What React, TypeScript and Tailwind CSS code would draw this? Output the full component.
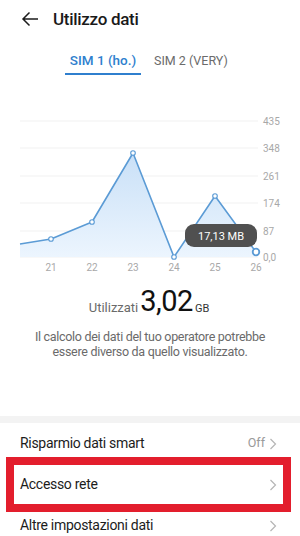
import React from "react";

const font = { fontFamily: "Roboto, 'Noto Sans', sans-serif" };

function Chart() {
  const gridYs = [21, 48, 76, 103, 131, 157];
  const labels = ["435", "348", "261", "174", "87", "0,0"];
  const pts: [number, number][] = [
    [20, 144],
    [51, 139],
    [92, 122],
    [133, 53],
    [174, 157],
    [215, 96],
    [256, 152],
  ];
  const line = pts.map((p, i) => `${i === 0 ? "M" : "L"}${p[0]} ${p[1]}`).join(" ");
  const area = `${line} L256 157 L20 157 Z`;
  const xs = [["21", 51], ["22", 92], ["23", 133], ["24", 174], ["25", 215], ["26", 256]] as const;
  return (
    <svg width="300" height="180" viewBox="0 0 300 180" className="block">
      <defs>
        <linearGradient id="fillg" x1="0" y1="0" x2="0" y2="1">
          <stop offset="0%" stopColor="#c9e0f7" />
          <stop offset="100%" stopColor="#ecf5fe" />
        </linearGradient>
      </defs>
      {gridYs.map((y, i) => (
        <line key={i} x1="20" x2="258" y1={y} y2={y} stroke="#f1f1f1" strokeWidth="1" />
      ))}
      <path d={area} fill="url(#fillg)" />
      <path d={line} fill="none" stroke="#5b9bd5" strokeWidth="1.6" strokeLinejoin="round" />
      {pts.slice(1, 6).map((p, i) => (
        <circle key={i} cx={p[0]} cy={p[1]} r="2.3" fill="#fff" stroke="#5b9bd5" strokeWidth="1.1" />
      ))}
      <circle cx="256" cy="152" r="3.3" fill="#fff" stroke="#5b9bd5" strokeWidth="1.8" />
      {labels.map((l, i) => (
        <text key={l} x="263" y={gridYs[i] + 4} fontSize="10" fill="#a8a8a8" style={font}>
          {l}
        </text>
      ))}
      {xs.map(([t, x]) => (
        <text key={t} x={x} y="171" fontSize="10" fill="#a8a8a8" textAnchor="middle" style={font}>
          {t}
        </text>
      ))}
      <rect x="185" y="124" width="72" height="23" rx="9" fill="#505050" />
      <text x="221" y="140" fontSize="11" fill="#ffffff" textAnchor="middle" style={font}>
        17,13 MB
      </text>
    </svg>
  );
}

function Chevron({ color = "#b5b5b5" }: { color?: string }) {
  return (
    <svg width="8" height="12" viewBox="0 0 8 12" className="block">
      <path d="M1.5 1 L6.5 6 L1.5 11" fill="none" stroke={color} strokeWidth="1.2" />
    </svg>
  );
}

export default function App() {
  return (
    <div className="relative w-[300px] h-[536px] bg-white overflow-hidden" style={font}>
      {/* Header */}
      <div className="h-[38px] flex items-center pl-[21px]">
        <svg width="18" height="16" viewBox="0 0 18 16" className="block">
          <path d="M17 8 H2 M8.5 1.5 L2 8 L8.5 14.5" fill="none" stroke="#1c1c1c" strokeWidth="1.5" />
        </svg>
        <span className="ml-[14px] text-[17px] font-medium text-[#1a1a1a] leading-none tracking-[-0.3px]">
          Utilizzo dati
        </span>
      </div>
      {/* Tabs */}
      <div className="h-[38px] flex items-stretch pl-[65px]">
        <div className="w-[76px] flex flex-col items-center justify-end">
          <span className="text-[13.5px] font-medium text-[#2f7fce] leading-none mb-[6px]">SIM 1 (ho.)</span>
          <div className="h-[2px] w-full bg-[#2f7fce] mb-[1px]" />
        </div>
        <div className="ml-[13px] flex flex-col justify-end">
          <span className="text-[12.5px] text-[#6b6b6b] leading-none mb-[9px]">SIM 2 (VERY)</span>
        </div>
      </div>
      <div className="h-[24px]" />
      <Chart />
      {/* Summary */}
      <div className="flex items-end justify-center h-[36px] pr-[2px]">
        <span className="text-[13px] text-[#6a6a6a] leading-none mb-[2px]">Utilizzati</span>
        <span className="text-[29px] text-[#111] leading-none ml-[2px] tracking-[-0.5px]">3,02</span>
        <span className="text-[11px] text-[#333] leading-none ml-[2px] mb-[2px]">GB</span>
      </div>
      <div className="mt-[13px] text-center text-[12.5px] leading-[15px] tracking-[-0.3px] text-[#6a6a6a] px-[20px]">
        Il calcolo dei dati del tuo operatore potrebbe
        <br />
        essere diverso da quello visualizzato.
      </div>
      <div className="absolute left-0 right-0 top-[416px]">
        <div className="h-[7px] bg-[#f3f3f3]" />
        <div className="h-[41px] flex items-center pl-[20px] pr-[23px]">
          <span className="flex-1 text-[14px] tracking-[-0.3px] text-[#1c1c1c]">Risparmio dati smart</span>
          <span className="text-[12.5px] text-[#9a9a9a] mr-[4px]">Off</span>
          <Chevron />
        </div>
        <div className="h-[41px] flex items-center pl-[20px] pr-[23px]">
          <span className="flex-1 text-[14px] tracking-[-0.3px] text-[#1c1c1c]">Accesso rete</span>
          <Chevron />
        </div>
        <div className="h-[41px] flex items-center pl-[20px] pr-[23px]">
          <span className="flex-1 text-[14px] tracking-[-0.3px] text-[#1c1c1c]">Altre impostazioni dati</span>
          <Chevron />
        </div>
      </div>
      {/* Red highlight overlay */}
      <div className="absolute left-[6px] top-[457px] w-[285px] h-[55px] border-[8px] border-[#e31e2d]" />
    </div>
  );
}
